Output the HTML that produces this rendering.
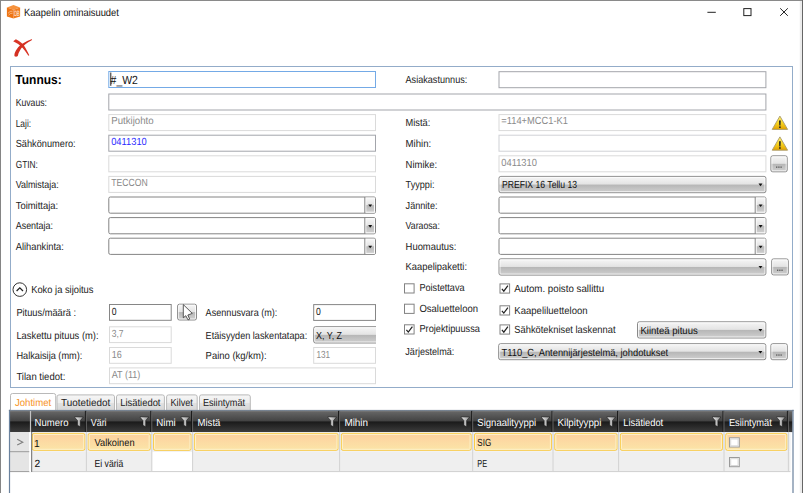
<!DOCTYPE html>
<html lang="fi"><head><meta charset="utf-8"><title>Kaapelin ominaisuudet</title>
<style>html,body{margin:0;padding:0;background:#fff;overflow:hidden}svg{display:block}text{font-family:"Liberation Sans",sans-serif;white-space:pre}</style></head>
<body><svg text-rendering="geometricPrecision" width="803" height="493" viewBox="0 0 803 493">
<defs>
<linearGradient id="gbtn" x1="0" y1="0" x2="0" y2="1">
<stop offset="0" stop-color="#f6f6f6"/><stop offset="0.47" stop-color="#e4e4e4"/><stop offset="0.53" stop-color="#b7b7b7"/><stop offset="1" stop-color="#d0d0d0"/></linearGradient>
<linearGradient id="ghead" x1="0" y1="0" x2="0" y2="1">
<stop offset="0" stop-color="#686868"/><stop offset="0.47" stop-color="#444"/><stop offset="0.53" stop-color="#1b1b1b"/><stop offset="1" stop-color="#3c3c3c"/></linearGradient>
<linearGradient id="gsel" x1="0" y1="0" x2="0" y2="1">
<stop offset="0" stop-color="#fdd09e"/><stop offset="1" stop-color="#fbe5a8"/></linearGradient>
<linearGradient id="gtab" x1="0" y1="0" x2="0" y2="1">
<stop offset="0" stop-color="#f6f6f6"/><stop offset="0.5" stop-color="#ededed"/><stop offset="0.5" stop-color="#e2e2e2"/><stop offset="1" stop-color="#d6d6d6"/></linearGradient>
<linearGradient id="gwarn" x1="0" y1="0" x2="0" y2="1">
<stop offset="0" stop-color="#fff27a"/><stop offset="0.55" stop-color="#f7d21e"/><stop offset="1" stop-color="#e2a100"/></linearGradient>
<linearGradient id="gicon" x1="0" y1="0" x2="0" y2="1">
<stop offset="0" stop-color="#f8a04a"/><stop offset="1" stop-color="#e66a10"/></linearGradient>
<g id="arrow"><path d="M-2,-1.2 L2,-1.2 L0,1.4 Z" fill="#111"/></g>
<linearGradient id="gfun" x1="0" y1="0" x2="1" y2="0"><stop offset="0" stop-color="#f2f2f2"/><stop offset="1" stop-color="#8e8e8e"/></linearGradient><g id="funnel"><path d="M-4.4,-4.4 L4.4,-4.4 L1.4,-0.8 L1.4,5.4 L-1.3,3.9 L-1.3,-0.8 Z" fill="url(#gfun)" stroke="#111" stroke-width="0.5"/></g>
<g id="warn"><path d="M0,-6.9 L7.7,6.4 L-7.7,6.4 Z" fill="url(#gwarn)" stroke="#a99a6a" stroke-width="0.9" stroke-linejoin="round"/>
<path d="M-0.9,-2.6 L0.9,-2.6 L0.6,2.6 L-0.6,2.6 Z" fill="#222"/><rect x="-0.8" y="3.4" width="1.6" height="1.6" fill="#222"/></g>
<g id="chk"><path d="M-2.9,0.2 L-1,2.5 L3.1,-3" fill="none" stroke="#222" stroke-width="1.25"/></g>
</defs>
<rect x="0" y="0" width="803" height="493" fill="#fff" />
<rect x="0" y="0" width="803" height="1" fill="#8a8a8a" />
<rect x="0" y="0" width="1" height="493" fill="#858585" />
<rect x="799.8" y="1" width="2.2" height="492" fill="#ececec" />
<rect x="802" y="0" width="1" height="493" fill="#666" />
<g><path d="M13.5,4.9 L20.1,7.4 L13.5,9.8 L6.9,7.4 Z" fill="#f6923c"/><path d="M6.9,7.4 L13.5,9.8 L13.5,18.6 L6.9,16.4 Z" fill="#ee7414"/><path d="M20.1,7.4 L13.5,9.8 L13.5,18.6 L20.1,16.4 Z" fill="#f07c1e"/><path d="M8,13.3 Q10,10.6 12.6,11.2 M8.6,15.2 Q10.2,12.8 12.6,13.2" fill="none" stroke="#fbd0a8" stroke-width="0.7"/></g>
<text x="14.2" y="15.9" font-size="7.6" fill="#fff" textLength="5.4" lengthAdjust="spacingAndGlyphs" >DB</text>
<text x="24.1" y="16.0" font-size="10.4" fill="#111" textLength="94.8" lengthAdjust="spacingAndGlyphs" >Kaapelin ominaisuudet</text>
<line x1="707.4" y1="12.3" x2="715.8" y2="12.3" stroke="#222" stroke-width="1"/>
<rect x="743.8" y="8.6" width="7.2" height="7" fill="none" stroke="#222" stroke-width="1" />
<path d="M780.2,8.3 L787.8,15.8 M787.8,8.3 L780.2,15.8" stroke="#222" stroke-width="1" fill="none"/>
<g fill="#d62414" opacity="0.92"><path d="M13.2,41.3 L15.9,39.2 Q22.6,42.4 25.2,47.4 Q27.6,51.6 29.3,55.3 L28.4,55.7 Q25.4,51 22.6,48 Q19,43.8 13.2,41.3 Z"/><path d="M32.1,39.1 L31.7,40.2 Q24.2,44 20.8,49 Q18.2,53 17.8,56 Q16.2,57.3 14.6,56.3 Q13.8,54 15.9,50.4 Q20,43.3 32.1,39.1 Z" fill="#d11f10"/></g>
<rect x="10.5" y="66.5" width="782" height="321" fill="none" stroke="#93acc9" stroke-width="1" />
<text x="15.3" y="84.4" font-size="13" fill="#000" font-weight="bold" textLength="46.4" lengthAdjust="spacingAndGlyphs" >Tunnus:</text>
<rect x="108.8" y="71.5" width="266.7" height="16" fill="#fff" stroke="#74aae6" stroke-width="1" />
<rect x="110.3" y="72.5" width="1" height="13.3" fill="#222" />
<text x="110.6" y="84.2" font-size="11.8" fill="#111" textLength="27.3" lengthAdjust="spacingAndGlyphs" >#_W2</text>
<text x="405.5" y="83" font-size="10.3" fill="#222" textLength="61.8" lengthAdjust="spacingAndGlyphs" >Asiakastunnus:</text>
<rect x="499.0" y="71.7" width="266.9" height="16.0" fill="#fff" stroke="#a3a5ab" stroke-width="1" />
<text x="15.7" y="106" font-size="10.3" fill="#222" textLength="31.3" lengthAdjust="spacingAndGlyphs" >Kuvaus:</text>
<rect x="108.8" y="94.0" width="657.1" height="16.0" fill="#fff" stroke="#a3a5ab" stroke-width="1" />
<text x="15.7" y="127" font-size="10.3" fill="#222" textLength="15.4" lengthAdjust="spacingAndGlyphs" >Laji:</text>
<rect x="108.8" y="114.6" width="266.7" height="16.0" fill="#fff" stroke="#dadada" stroke-width="1" />
<text x="111.2" y="124.39999999999999" font-size="10.3" fill="#8a8a8a" textLength="42.4" lengthAdjust="spacingAndGlyphs" >Putkijohto</text>
<text x="15.7" y="147" font-size="10.3" fill="#222" textLength="60" lengthAdjust="spacingAndGlyphs" >Sähkönumero:</text>
<rect x="108.8" y="135.2" width="266.7" height="16.0" fill="#fff" stroke="#a3a5ab" stroke-width="1" />
<text x="111.2" y="145.0" font-size="10.3" fill="#2b2bff" textLength="35.6" lengthAdjust="spacingAndGlyphs" >0411310</text>
<text x="15.7" y="168" font-size="10.3" fill="#222" textLength="22.2" lengthAdjust="spacingAndGlyphs" >GTIN:</text>
<rect x="108.8" y="155.8" width="266.7" height="16.0" fill="#fff" stroke="#dadada" stroke-width="1" />
<text x="15.7" y="188" font-size="10.3" fill="#222" textLength="43" lengthAdjust="spacingAndGlyphs" >Valmistaja:</text>
<rect x="108.8" y="176.4" width="266.7" height="16.0" fill="#fff" stroke="#dadada" stroke-width="1" />
<text x="111.2" y="186.20000000000002" font-size="10.3" fill="#8a8a8a" textLength="36.5" lengthAdjust="spacingAndGlyphs" >TECCON</text>
<text x="15.7" y="209" font-size="10.3" fill="#222" textLength="42.5" lengthAdjust="spacingAndGlyphs" >Toimittaja:</text>
<rect x="108.8" y="197.0" width="266.7" height="16.19999999999999" fill="#fff" stroke="#848484" stroke-width="1" rx="1.5" />
<rect x="365.8" y="198.0" width="8.7" height="14.2" fill="url(#gbtn)" stroke="#fafafa" stroke-width="1" />
<line x1="364.8" y1="197.0" x2="364.8" y2="213.2" stroke="#848484" stroke-width="1"/>
<use href="#arrow" x="370.2" y="205.7"/>
<text x="15.7" y="229" font-size="10.3" fill="#222" textLength="37.3" lengthAdjust="spacingAndGlyphs" >Asentaja:</text>
<rect x="108.8" y="217.6" width="266.7" height="16.19999999999999" fill="#fff" stroke="#848484" stroke-width="1" rx="1.5" />
<rect x="365.8" y="218.6" width="8.7" height="14.2" fill="url(#gbtn)" stroke="#fafafa" stroke-width="1" />
<line x1="364.8" y1="217.6" x2="364.8" y2="233.79999999999998" stroke="#848484" stroke-width="1"/>
<use href="#arrow" x="370.2" y="226.3"/>
<text x="15.7" y="250" font-size="10.3" fill="#222" textLength="48.2" lengthAdjust="spacingAndGlyphs" >Alihankinta:</text>
<rect x="108.8" y="238.2" width="266.7" height="16.19999999999999" fill="#fff" stroke="#848484" stroke-width="1" rx="1.5" />
<rect x="365.8" y="239.2" width="8.7" height="14.2" fill="url(#gbtn)" stroke="#fafafa" stroke-width="1" />
<line x1="364.8" y1="238.2" x2="364.8" y2="254.39999999999998" stroke="#848484" stroke-width="1"/>
<use href="#arrow" x="370.2" y="246.9"/>
<text x="405.6" y="126" font-size="10.3" fill="#222" textLength="24.7" lengthAdjust="spacingAndGlyphs" >Mistä:</text>
<rect x="499.0" y="114.6" width="266.9" height="16.0" fill="#fff" stroke="#dadada" stroke-width="1" />
<text x="501.3" y="124.39999999999999" font-size="10.3" fill="#8a8a8a" textLength="66.7" lengthAdjust="spacingAndGlyphs" >=114+MCC1-K1</text>
<text x="405.6" y="147" font-size="10.3" fill="#222" textLength="25.6" lengthAdjust="spacingAndGlyphs" >Mihin:</text>
<rect x="499.0" y="135.2" width="266.9" height="16.0" fill="#fff" stroke="#d0d2d6" stroke-width="1" />
<text x="405.6" y="168" font-size="10.3" fill="#222" textLength="31.6" lengthAdjust="spacingAndGlyphs" >Nimike:</text>
<rect x="499.0" y="155.8" width="266.9" height="16.0" fill="#fff" stroke="#dadada" stroke-width="1" />
<text x="501.3" y="165.60000000000002" font-size="10.3" fill="#8a8a8a" textLength="35.6" lengthAdjust="spacingAndGlyphs" >0411310</text>
<text x="405.6" y="188" font-size="10.3" fill="#222" textLength="28.9" lengthAdjust="spacingAndGlyphs" >Tyyppi:</text>
<rect x="499.0" y="176.4" width="266.9" height="16.30000000000001" fill="url(#gbtn)" stroke="#8a8a8a" stroke-width="1" rx="1.8" />
<rect x="500.0" y="177.4" width="264.9" height="14.3" fill="none" stroke="#fff" stroke-width="1" rx="1" stroke-opacity="0.75"/>
<use href="#arrow" x="760.5" y="184.8"/>
<text x="501.9" y="188.3" font-size="10.3" fill="#111" textLength="75.2" lengthAdjust="spacingAndGlyphs" >PREFIX 16 Tellu 13</text>
<text x="405.6" y="209" font-size="10.3" fill="#222" textLength="31.9" lengthAdjust="spacingAndGlyphs" >Jännite:</text>
<rect x="499.0" y="197.0" width="266.9" height="16.19999999999999" fill="#fff" stroke="#848484" stroke-width="1" rx="1.5" />
<rect x="756.1999999999999" y="198.0" width="8.7" height="14.2" fill="url(#gbtn)" stroke="#fafafa" stroke-width="1" />
<line x1="755.1999999999999" y1="197.0" x2="755.1999999999999" y2="213.2" stroke="#848484" stroke-width="1"/>
<use href="#arrow" x="760.6" y="205.7"/>
<text x="405.6" y="229" font-size="10.3" fill="#222" textLength="34.3" lengthAdjust="spacingAndGlyphs" >Varaosa:</text>
<rect x="499.0" y="217.6" width="266.9" height="16.19999999999999" fill="#fff" stroke="#848484" stroke-width="1" rx="1.5" />
<rect x="756.1999999999999" y="218.6" width="8.7" height="14.2" fill="url(#gbtn)" stroke="#fafafa" stroke-width="1" />
<line x1="755.1999999999999" y1="217.6" x2="755.1999999999999" y2="233.79999999999998" stroke="#848484" stroke-width="1"/>
<use href="#arrow" x="760.6" y="226.3"/>
<text x="405.6" y="250" font-size="10.3" fill="#222" textLength="50.8" lengthAdjust="spacingAndGlyphs" >Huomautus:</text>
<rect x="499.0" y="238.2" width="266.9" height="16.19999999999999" fill="#fff" stroke="#848484" stroke-width="1" rx="1.5" />
<rect x="756.1999999999999" y="239.2" width="8.7" height="14.2" fill="url(#gbtn)" stroke="#fafafa" stroke-width="1" />
<line x1="755.1999999999999" y1="238.2" x2="755.1999999999999" y2="254.39999999999998" stroke="#848484" stroke-width="1"/>
<use href="#arrow" x="760.6" y="246.9"/>
<text x="405.6" y="270" font-size="10.3" fill="#222" textLength="61.4" lengthAdjust="spacingAndGlyphs" >Kaapelipaketti:</text>
<rect x="499.0" y="258.8" width="266.9" height="16.30000000000001" fill="url(#gbtn)" stroke="#8a8a8a" stroke-width="1" rx="1.8" />
<rect x="500.0" y="259.8" width="264.9" height="14.3" fill="none" stroke="#fff" stroke-width="1" rx="1" stroke-opacity="0.75"/>
<use href="#arrow" x="760.5" y="267.2"/>
<use href="#warn" x="779.9" y="123"/>
<use href="#warn" x="779.9" y="143.8"/>
<rect x="770.9" y="155.8" width="16.300000000000068" height="16.0" fill="url(#gbtn)" stroke="#8a8a8a" stroke-width="1" rx="1.8" />
<rect x="771.9" y="156.8" width="14.300000000000068" height="14" fill="none" stroke="#fff" stroke-width="1" rx="1" stroke-opacity="0.75"/>
<rect x="776.05" y="166.5" width="1.3" height="1.3" fill="#555" />
<rect x="778.25" y="166.5" width="1.3" height="1.3" fill="#555" />
<rect x="780.4499999999999" y="166.5" width="1.3" height="1.3" fill="#555" />
<rect x="771.7" y="258.9" width="16.59999999999991" height="16.0" fill="url(#gbtn)" stroke="#8a8a8a" stroke-width="1" rx="1.8" />
<rect x="772.7" y="259.9" width="14.599999999999909" height="14" fill="none" stroke="#fff" stroke-width="1" rx="1" stroke-opacity="0.75"/>
<rect x="777.0" y="269.59999999999997" width="1.3" height="1.3" fill="#555" />
<rect x="779.2" y="269.59999999999997" width="1.3" height="1.3" fill="#555" />
<rect x="781.4" y="269.59999999999997" width="1.3" height="1.3" fill="#555" />
<circle cx="19.8" cy="289.6" r="6.8" fill="#fff" stroke="#333" stroke-width="1"/><path d="M16.6,291 L19.8,287.8 L23,291" fill="none" stroke="#222" stroke-width="1.3"/>
<text x="31.2" y="293" font-size="10.3" fill="#222" textLength="62.3" lengthAdjust="spacingAndGlyphs" >Koko ja sijoitus</text>
<text x="16.4" y="316.3" font-size="10.3" fill="#222" textLength="59.7" lengthAdjust="spacingAndGlyphs" >Pituus/määrä :</text>
<rect x="109.5" y="304.5" width="61.69999999999999" height="15.800000000000011" fill="#fff" stroke="#868686" stroke-width="1" />
<text x="111.7" y="315" font-size="10.3" fill="#111" textLength="4.8" lengthAdjust="spacingAndGlyphs" >0</text>
<text x="16.4" y="338.7" font-size="10.3" fill="#222" textLength="82.1" lengthAdjust="spacingAndGlyphs" >Laskettu pituus (m):</text>
<rect x="109.5" y="326.8" width="61.69999999999999" height="15.800000000000011" fill="#fff" stroke="#dadada" stroke-width="1" />
<text x="111.7" y="337" font-size="10.3" fill="#8a8a8a" textLength="11.8" lengthAdjust="spacingAndGlyphs" >3,7</text>
<text x="16.4" y="359.3" font-size="10.3" fill="#222" textLength="66" lengthAdjust="spacingAndGlyphs" >Halkaisija (mm):</text>
<rect x="109.5" y="347.5" width="61.69999999999999" height="15.800000000000011" fill="#fff" stroke="#dadada" stroke-width="1" />
<text x="111.7" y="357.6" font-size="10.3" fill="#8a8a8a" textLength="10" lengthAdjust="spacingAndGlyphs" >16</text>
<text x="16.4" y="379.7" font-size="10.3" fill="#222" textLength="48.9" lengthAdjust="spacingAndGlyphs" >Tilan tiedot:</text>
<rect x="109.5" y="367.9" width="266" height="15.800000000000011" fill="#fff" stroke="#dadada" stroke-width="1" />
<text x="111.7" y="378.2" font-size="10.3" fill="#8a8a8a" textLength="28.6" lengthAdjust="spacingAndGlyphs" >AT (11)</text>
<rect x="177.6" y="304.2" width="18.900000000000006" height="15.800000000000011" fill="url(#gbtn)" stroke="#8a8a8a" stroke-width="1" rx="1.8" />
<rect x="178.6" y="305.2" width="16.9" height="13.8" fill="none" stroke="#fff" stroke-width="1" rx="1" stroke-opacity="0.75"/>
<path d="M183.3,304.6 L183.3,317.8 L185.8,315.7 L188,319.9 L189.7,319.1 L187.8,315 L192.3,313.4 Z" fill="#fff" stroke="#333" stroke-width="0.8" stroke-linejoin="round"/>
<text x="205.6" y="316.2" font-size="10.3" fill="#222" textLength="71.8" lengthAdjust="spacingAndGlyphs" >Asennusvara (m):</text>
<rect x="313.7" y="304.6" width="61.80000000000001" height="15.800000000000011" fill="#fff" stroke="#868686" stroke-width="1" />
<text x="316" y="314.9" font-size="10.3" fill="#111" textLength="4.8" lengthAdjust="spacingAndGlyphs" >0</text>
<text x="205.6" y="339" font-size="10.3" fill="#222" textLength="101.6" lengthAdjust="spacingAndGlyphs" >Etäisyyden laskentatapa:</text>
<clipPath id="cxyz"><rect x="313" y="325" width="63" height="20"/></clipPath><g clip-path="url(#cxyz)">
<rect x="313.7" y="326.7" width="105.80000000000001" height="16.30000000000001" fill="url(#gbtn)" stroke="#8a8a8a" stroke-width="1" rx="1.8" />
<rect x="314.7" y="327.7" width="103.80000000000001" height="14.3" fill="none" stroke="#fff" stroke-width="1" rx="1" stroke-opacity="0.75"/>
<text x="316.0" y="339.0" font-size="10.3" fill="#111" textLength="26.1" lengthAdjust="spacingAndGlyphs" >X, Y, Z</text>
</g>
<text x="205.6" y="359.1" font-size="10.3" fill="#222" textLength="61" lengthAdjust="spacingAndGlyphs" >Paino (kg/km):</text>
<rect x="313.7" y="347.5" width="61.80000000000001" height="15.800000000000011" fill="#fff" stroke="#dadada" stroke-width="1" />
<text x="316.4" y="358.1" font-size="10.3" fill="#8a8a8a" textLength="13.6" lengthAdjust="spacingAndGlyphs" >131</text>
<rect x="404.5" y="283.8" width="9.600000000000023" height="9.200000000000045" fill="#fff" stroke="#828282" stroke-width="1" />
<text x="419.4" y="291.3" font-size="10.3" fill="#222" textLength="45.2" lengthAdjust="spacingAndGlyphs" >Poistettava</text>
<rect x="404.5" y="304.2" width="9.600000000000023" height="9.200000000000045" fill="#fff" stroke="#828282" stroke-width="1" />
<text x="419.4" y="311.9" font-size="10.3" fill="#222" textLength="58.6" lengthAdjust="spacingAndGlyphs" >Osaluetteloon</text>
<rect x="404.5" y="324.8" width="9.600000000000023" height="9.200000000000045" fill="#fff" stroke="#828282" stroke-width="1" />
<use href="#chk" x="409.3" y="329.6"/>
<text x="419.4" y="332.3" font-size="10.3" fill="#222" textLength="60.6" lengthAdjust="spacingAndGlyphs" >Projektipuussa</text>
<rect x="500.0" y="283.9" width="9.600000000000023" height="9.200000000000045" fill="#fff" stroke="#828282" stroke-width="1" />
<use href="#chk" x="504.8" y="288.7"/>
<text x="514.3" y="291.9" font-size="10.3" fill="#222" textLength="89.9" lengthAdjust="spacingAndGlyphs" >Autom. poisto sallittu</text>
<rect x="500.0" y="305.8" width="9.600000000000023" height="9.200000000000045" fill="#fff" stroke="#828282" stroke-width="1" />
<use href="#chk" x="504.8" y="310.6"/>
<text x="514.3" y="313.8" font-size="10.3" fill="#222" textLength="73.3" lengthAdjust="spacingAndGlyphs" >Kaapeliluetteloon</text>
<rect x="500.0" y="324.9" width="9.600000000000023" height="9.200000000000045" fill="#fff" stroke="#828282" stroke-width="1" />
<use href="#chk" x="504.8" y="329.7"/>
<text x="514.3" y="332.8" font-size="10.3" fill="#222" textLength="101.2" lengthAdjust="spacingAndGlyphs" >Sähkötekniset laskennat</text>
<rect x="637.5" y="321.8" width="128.29999999999995" height="16.19999999999999" fill="url(#gbtn)" stroke="#8a8a8a" stroke-width="1" rx="1.8" />
<rect x="638.5" y="322.8" width="126.29999999999995" height="14.2" fill="none" stroke="#fff" stroke-width="1" rx="1" stroke-opacity="0.75"/>
<use href="#arrow" x="760.4" y="330.2"/>
<text x="640.4" y="333.7" font-size="10.3" fill="#111" textLength="57.4" lengthAdjust="spacingAndGlyphs" >Kiinteä pituus</text>
<text x="405.3" y="355.3" font-size="10.3" fill="#222" textLength="49" lengthAdjust="spacingAndGlyphs" >Järjestelmä:</text>
<rect x="498.7" y="343.7" width="267.09999999999997" height="16.0" fill="url(#gbtn)" stroke="#8a8a8a" stroke-width="1" rx="1.8" />
<rect x="499.7" y="344.7" width="265.09999999999997" height="14" fill="none" stroke="#fff" stroke-width="1" rx="1" stroke-opacity="0.75"/>
<use href="#arrow" x="760.4" y="352.09999999999997"/>
<text x="501.59999999999997" y="355.59999999999997" font-size="10.3" fill="#111" textLength="166.6" lengthAdjust="spacingAndGlyphs" >T110_C, Antennijärjestelmä, johdotukset</text>
<rect x="770.9" y="343.7" width="16.399999999999977" height="16.0" fill="url(#gbtn)" stroke="#8a8a8a" stroke-width="1" rx="1.8" />
<rect x="771.9" y="344.7" width="14.399999999999977" height="14" fill="none" stroke="#fff" stroke-width="1" rx="1" stroke-opacity="0.75"/>
<rect x="776.0999999999999" y="354.4" width="1.3" height="1.3" fill="#555" />
<rect x="778.3" y="354.4" width="1.3" height="1.3" fill="#555" />
<rect x="780.4999999999999" y="354.4" width="1.3" height="1.3" fill="#555" />
<path d="M10.5,410.5 L10.5,395.5 Q10.5,393.5 12.5,393.5 L53.7,393.5 Q55.7,393.5 55.7,395.5 L55.7,410.5" fill="#fff" stroke="#b9b9b9"/>
<text x="14.9" y="405.6" font-size="10.3" fill="#f7931e" textLength="36.4" lengthAdjust="spacingAndGlyphs" >Johtimet</text>
<path d="M57.0,410.5 L57.0,396.9 Q57.0,394.9 59.0,394.9 L112.5,394.9 Q114.5,394.9 114.5,396.9 L114.5,410.5" fill="url(#gtab)" stroke="#b9b9b9"/>
<text x="61" y="405.6" font-size="10.3" fill="#222" textLength="49.2" lengthAdjust="spacingAndGlyphs" >Tuotetiedot</text>
<path d="M116.5,410.5 L116.5,396.9 Q116.5,394.9 118.5,394.9 L162.4,394.9 Q164.4,394.9 164.4,396.9 L164.4,410.5" fill="url(#gtab)" stroke="#b9b9b9"/>
<text x="120.2" y="405.6" font-size="10.3" fill="#222" textLength="40.3" lengthAdjust="spacingAndGlyphs" >Lisätiedot</text>
<path d="M166.6,410.5 L166.6,396.9 Q166.6,394.9 168.6,394.9 L195.2,394.9 Q197.2,394.9 197.2,396.9 L197.2,410.5" fill="url(#gtab)" stroke="#b9b9b9"/>
<text x="170.5" y="405.6" font-size="10.3" fill="#222" textLength="22.4" lengthAdjust="spacingAndGlyphs" >Kilvet</text>
<path d="M199.5,410.5 L199.5,396.9 Q199.5,394.9 201.5,394.9 L248.3,394.9 Q250.3,394.9 250.3,396.9 L250.3,410.5" fill="url(#gtab)" stroke="#b9b9b9"/>
<text x="202.9" y="405.6" font-size="10.3" fill="#222" textLength="42.2" lengthAdjust="spacingAndGlyphs" >Esiintymät</text>
<rect x="10" y="410" width="783" height="83" fill="#fff" />
<rect x="10" y="410.6" width="782.5" height="21.5" fill="url(#ghead)" />
<rect x="10" y="410.6" width="782.5" height="1" fill="#7a7a7a" />
<rect x="10" y="432.0" width="19.3" height="39.39999999999998" fill="#e5e5e5" />
<rect x="31.3" y="432.0" width="759.2" height="19.399999999999977" fill="#eceef2" />
<rect x="31.3" y="451.4" width="759.2" height="20.0" fill="#efefef" />
<rect x="152.2" y="452.0" width="39.8" height="19.0" fill="#fff" />
<line x1="10" y1="451.7" x2="30" y2="451.7" stroke="#9c9c9c" stroke-width="1"/>
<line x1="10" y1="471.59999999999997" x2="30.5" y2="471.59999999999997" stroke="#9c9c9c" stroke-width="1"/>
<line x1="31" y1="471.59999999999997" x2="790.5" y2="471.59999999999997" stroke="#cfcfcf" stroke-width="1"/>
<text x="34.6" y="425.6" font-size="10.3" fill="#fff" textLength="33.9" lengthAdjust="spacingAndGlyphs" >Numero</text>
<use href="#funnel" x="78.9" y="421.4"/>
<line x1="85.39999999999999" y1="410.5" x2="85.39999999999999" y2="432.0" stroke="#161616" stroke-width="1"/>
<line x1="86.39999999999999" y1="410.5" x2="86.39999999999999" y2="432.0" stroke="#626262" stroke-width="1"/>
<line x1="86.39999999999999" y1="432.0" x2="86.39999999999999" y2="471.4" stroke="#d2d2d2" stroke-width="1"/>
<rect x="32.4" y="433.4" width="52.4" height="16.9" fill="url(#gsel)" stroke="#fbcb45" stroke-width="1" rx="1.5" />
<rect x="33.4" y="434.4" width="50.4" height="14.9" fill="none" stroke="#fdf2cc" stroke-width="1" rx="0.8" />
<text x="90.8" y="425.6" font-size="10.3" fill="#fff" textLength="15.8" lengthAdjust="spacingAndGlyphs" >Väri</text>
<use href="#funnel" x="144.3" y="421.4"/>
<line x1="150.79999999999998" y1="410.5" x2="150.79999999999998" y2="432.0" stroke="#161616" stroke-width="1"/>
<line x1="151.79999999999998" y1="410.5" x2="151.79999999999998" y2="432.0" stroke="#626262" stroke-width="1"/>
<line x1="151.79999999999998" y1="432.0" x2="151.79999999999998" y2="471.4" stroke="#d2d2d2" stroke-width="1"/>
<rect x="88.2" y="433.4" width="61.99999999999999" height="16.9" fill="url(#gsel)" stroke="#fbcb45" stroke-width="1" rx="1.5" />
<rect x="89.2" y="434.4" width="59.99999999999999" height="14.9" fill="none" stroke="#fdf2cc" stroke-width="1" rx="0.8" />
<text x="156.2" y="425.6" font-size="10.3" fill="#fff" textLength="19.5" lengthAdjust="spacingAndGlyphs" >Nimi</text>
<use href="#funnel" x="185.1" y="421.4"/>
<line x1="191.6" y1="410.5" x2="191.6" y2="432.0" stroke="#161616" stroke-width="1"/>
<line x1="192.6" y1="410.5" x2="192.6" y2="432.0" stroke="#626262" stroke-width="1"/>
<line x1="192.6" y1="432.0" x2="192.6" y2="471.4" stroke="#d2d2d2" stroke-width="1"/>
<rect x="153.6" y="433.4" width="37.40000000000001" height="16.9" fill="url(#gsel)" stroke="#fbcb45" stroke-width="1" rx="1.5" />
<rect x="154.6" y="434.4" width="35.40000000000001" height="14.9" fill="none" stroke="#fdf2cc" stroke-width="1" rx="0.8" />
<text x="197.5" y="425.6" font-size="10.3" fill="#fff" textLength="22.9" lengthAdjust="spacingAndGlyphs" >Mistä</text>
<use href="#funnel" x="332.1" y="421.4"/>
<line x1="338.6" y1="410.5" x2="338.6" y2="432.0" stroke="#161616" stroke-width="1"/>
<line x1="339.6" y1="410.5" x2="339.6" y2="432.0" stroke="#626262" stroke-width="1"/>
<line x1="339.6" y1="432.0" x2="339.6" y2="471.4" stroke="#d2d2d2" stroke-width="1"/>
<rect x="194.4" y="433.4" width="143.6" height="16.9" fill="url(#gsel)" stroke="#fbcb45" stroke-width="1" rx="1.5" />
<rect x="195.4" y="434.4" width="141.6" height="14.9" fill="none" stroke="#fdf2cc" stroke-width="1" rx="0.8" />
<text x="344.4" y="425.6" font-size="10.3" fill="#fff" textLength="23.7" lengthAdjust="spacingAndGlyphs" >Mihin</text>
<use href="#funnel" x="465.2" y="421.4"/>
<line x1="471.70000000000005" y1="410.5" x2="471.70000000000005" y2="432.0" stroke="#161616" stroke-width="1"/>
<line x1="472.70000000000005" y1="410.5" x2="472.70000000000005" y2="432.0" stroke="#626262" stroke-width="1"/>
<line x1="472.70000000000005" y1="432.0" x2="472.70000000000005" y2="471.4" stroke="#d2d2d2" stroke-width="1"/>
<rect x="341.4" y="433.4" width="129.70000000000002" height="16.9" fill="url(#gsel)" stroke="#fbcb45" stroke-width="1" rx="1.5" />
<rect x="342.4" y="434.4" width="127.70000000000002" height="14.9" fill="none" stroke="#fdf2cc" stroke-width="1" rx="0.8" />
<text x="477.3" y="425.6" font-size="10.3" fill="#fff" textLength="58.9" lengthAdjust="spacingAndGlyphs" >Signaalityyppi</text>
<use href="#funnel" x="545.5" y="421.4"/>
<line x1="552.0" y1="410.5" x2="552.0" y2="432.0" stroke="#161616" stroke-width="1"/>
<line x1="553.0" y1="410.5" x2="553.0" y2="432.0" stroke="#626262" stroke-width="1"/>
<line x1="553.0" y1="432.0" x2="553.0" y2="471.4" stroke="#d2d2d2" stroke-width="1"/>
<rect x="474.5" y="433.4" width="76.89999999999995" height="16.9" fill="url(#gsel)" stroke="#fbcb45" stroke-width="1" rx="1.5" />
<rect x="475.5" y="434.4" width="74.89999999999995" height="14.9" fill="none" stroke="#fdf2cc" stroke-width="1" rx="0.8" />
<text x="557.5" y="425.6" font-size="10.3" fill="#fff" textLength="43.9" lengthAdjust="spacingAndGlyphs" >Kilpityyppi</text>
<use href="#funnel" x="611.1" y="421.4"/>
<line x1="617.6" y1="410.5" x2="617.6" y2="432.0" stroke="#161616" stroke-width="1"/>
<line x1="618.6" y1="410.5" x2="618.6" y2="432.0" stroke="#626262" stroke-width="1"/>
<line x1="618.6" y1="432.0" x2="618.6" y2="471.4" stroke="#d2d2d2" stroke-width="1"/>
<rect x="554.8" y="433.4" width="62.200000000000024" height="16.9" fill="url(#gsel)" stroke="#fbcb45" stroke-width="1" rx="1.5" />
<rect x="555.8" y="434.4" width="60.200000000000024" height="14.9" fill="none" stroke="#fdf2cc" stroke-width="1" rx="0.8" />
<text x="623.3" y="425.6" font-size="10.3" fill="#fff" textLength="39.9" lengthAdjust="spacingAndGlyphs" >Lisätiedot</text>
<use href="#funnel" x="716.5" y="421.4"/>
<line x1="723.0" y1="410.5" x2="723.0" y2="432.0" stroke="#161616" stroke-width="1"/>
<line x1="724.0" y1="410.5" x2="724.0" y2="432.0" stroke="#626262" stroke-width="1"/>
<line x1="724.0" y1="432.0" x2="724.0" y2="471.4" stroke="#d2d2d2" stroke-width="1"/>
<rect x="620.4" y="433.4" width="101.99999999999997" height="16.9" fill="url(#gsel)" stroke="#fbcb45" stroke-width="1" rx="1.5" />
<rect x="621.4" y="434.4" width="99.99999999999997" height="14.9" fill="none" stroke="#fdf2cc" stroke-width="1" rx="0.8" />
<text x="728.9" y="425.6" font-size="10.3" fill="#fff" textLength="43" lengthAdjust="spacingAndGlyphs" >Esiintymät</text>
<use href="#funnel" x="780.9" y="421.4"/>
<line x1="787.4" y1="410.5" x2="787.4" y2="432.0" stroke="#161616" stroke-width="1"/>
<line x1="788.4" y1="410.5" x2="788.4" y2="432.0" stroke="#626262" stroke-width="1"/>
<line x1="788.4" y1="432.0" x2="788.4" y2="471.4" stroke="#d2d2d2" stroke-width="1"/>
<rect x="725.8" y="433.4" width="60.99999999999998" height="16.9" fill="url(#gsel)" stroke="#fbcb45" stroke-width="1" rx="1.5" />
<rect x="726.8" y="434.4" width="58.99999999999998" height="14.9" fill="none" stroke="#fdf2cc" stroke-width="1" rx="0.8" />
<rect x="29.3" y="432.0" width="2" height="39.99999999999998" fill="#fff" />
<line x1="30.5" y1="410.8" x2="30.5" y2="432.0" stroke="#c4c4c4" stroke-width="1.2"/>
<line x1="31.7" y1="432.0" x2="31.7" y2="471.9" stroke="#5a5a5a" stroke-width="0.9"/>
<path d="M17.2,439.3 L22.8,442.2 L17.2,445.1" fill="none" stroke="#808080" stroke-width="1.1"/>
<text x="34.1" y="446.7" font-size="10.3" fill="#111" >1</text>
<text x="34.4" y="466.7" font-size="10.3" fill="#111" >2</text>
<text x="94.5" y="446.1" font-size="10.3" fill="#111" textLength="40.1" lengthAdjust="spacingAndGlyphs" >Valkoinen</text>
<text x="94.5" y="466.6" font-size="10.3" fill="#111" textLength="28.8" lengthAdjust="spacingAndGlyphs" >Ei väriä</text>
<text x="477.3" y="446" font-size="10.3" fill="#111" textLength="13.9" lengthAdjust="spacingAndGlyphs" >SIG</text>
<text x="477.3" y="466.5" font-size="10.3" fill="#111" textLength="9.8" lengthAdjust="spacingAndGlyphs" >PE</text>
<rect x="729.5" y="437.8" width="9.799999999999955" height="9.199999999999989" fill="#fff" stroke="#9a9a9a" stroke-width="1" />
<rect x="730.7" y="439.0" width="7.399999999999977" height="6.800000000000011" fill="#fff" stroke="#d8d8d8" stroke-width="1" />
<rect x="729.5" y="457.5" width="9.799999999999955" height="9.199999999999989" fill="#fff" stroke="#9a9a9a" stroke-width="1" />
<rect x="730.7" y="458.7" width="7.399999999999977" height="6.800000000000011" fill="#fff" stroke="#d8d8d8" stroke-width="1" />
<rect x="8.9" y="409.8" width="1.2" height="83.5" fill="#6a829e" />
<rect x="792.4" y="409.8" width="1.2" height="83.5" fill="#6a829e" />
<rect x="8.9" y="409.9" width="784.7" height="0.9" fill="#6b7a8c" />
</svg></body></html>
